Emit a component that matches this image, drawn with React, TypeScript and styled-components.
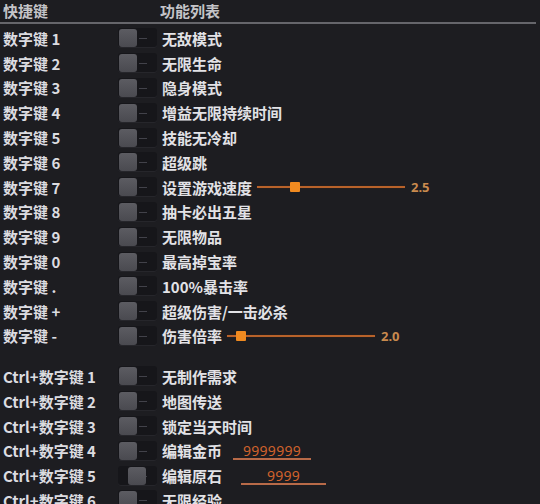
import styled, { createGlobalStyle } from "styled-components"

const Global = createGlobalStyle`
  html, body {
    margin: 0;
    padding: 0;
    background: #1d1d21;
    overflow: hidden;
  }
  body {
    font-family: "Noto Sans CJK SC", "Noto Sans", sans-serif;
  }
`

const Page = styled.div`
  width: 540px;
  height: 504px;
  background: #1d1d21;
  overflow: hidden;
`

const Header = styled.div`
  display: flex;
  align-items: center;
  height: 20px;
  padding: 0 0 2px 3px;
  border-bottom: 2px solid #66666b;
  margin-right: 4px;
  color: #c4c4c8;
  font-size: 15px;
  font-weight: 700;
`

const HeadKey = styled.div`
  width: 157px;
`

const List = styled.div`
  padding-top: 2px;
`

const Row = styled.div<{ $gap?: boolean }>`
  display: flex;
  align-items: center;
  height: 24.8px;
  margin-top: ${(p) => (p.$gap ? "15.7px" : "0")};
`

const KeyLabel = styled.div`
  width: 114px;
  padding-left: 3px;
  box-sizing: border-box;
  color: #dcdce0;
  font-size: 15px;
  font-weight: 700;
  white-space: nowrap;
`

const Track = styled.div`
  position: relative;
  width: 39px;
  height: 20px;
  margin-left: 4px;
  margin-right: 5px;
  background: #16161a;
  border-radius: 3px;
  box-shadow: inset 0 -1px 0 #26262b;
  flex-shrink: 0;
`

const Knob = styled.div<{ $shift: number }>`
  position: absolute;
  top: 1px;
  left: ${(p) => 1 + p.$shift}px;
  width: 18px;
  height: 18px;
  border-radius: 3px;
  background: linear-gradient(#5c5c62, #4a4a50);
`

const Dash = styled.div`
  position: absolute;
  top: 10px;
  left: 21px;
  width: 8px;
  height: 1px;
  background: #42424a;
`

const FuncName = styled.div`
  color: #e2e2e6;
  font-size: 15px;
  font-weight: 700;
  white-space: nowrap;
`

const SliderBox = styled.div<{ $width: number }>`
  position: relative;
  width: ${(p) => p.$width}px;
  height: 12px;
  margin-left: 5px;
  display: flex;
  align-items: center;
`

const SliderLine = styled.div`
  width: 100%;
  height: 2px;
  background: #b8622a;
  box-shadow: 0 0 1px #6a2a10;
`

const SliderThumb = styled.div`
  position: absolute;
  top: 1px;
  width: 10px;
  height: 10px;
  background: #f08a20;
  border-radius: 1px;
`

const SliderValue = styled.div`
  margin-left: 6px;
  color: #c98a4e;
  font-family: "Noto Sans", sans-serif;
  font-size: 13px;
  font-weight: 700;
`

const Field = styled.div<{ $width: number; $offset: number }>`
  width: ${(p) => p.$width}px;
  margin-left: ${(p) => p.$offset}px;
  height: 18px;
  border-bottom: 2px solid #b86a48;
  color: #d0622c;
  font-family: "Noto Sans", sans-serif;
  font-size: 14px;
  line-height: 18px;
  text-align: center;
  box-sizing: border-box;
  letter-spacing: 0.3px;
`

type Item = {
  key: string
  name: string
  gap?: boolean
  shift?: number
  slider?: { width: number; pos: number; value: string }
  field?: { width: number; offset: number; value: string }
}

const items: Item[] = [
  { key: "数字键 1", name: "无敌模式" },
  { key: "数字键 2", name: "无限生命" },
  { key: "数字键 3", name: "隐身模式" },
  { key: "数字键 4", name: "增益无限持续时间" },
  { key: "数字键 5", name: "技能无冷却" },
  { key: "数字键 6", name: "超级跳" },
  { key: "数字键 7", name: "设置游戏速度", slider: { width: 148, pos: 33, value: "2.5" } },
  { key: "数字键 8", name: "抽卡必出五星" },
  { key: "数字键 9", name: "无限物品" },
  { key: "数字键 0", name: "最高掉宝率" },
  { key: "数字键 .", name: "100%暴击率" },
  { key: "数字键 +", name: "超级伤害/一击必杀" },
  { key: "数字键 -", name: "伤害倍率", slider: { width: 148, pos: 9, value: "2.0" } },
  { key: "Ctrl+数字键 1", name: "无制作需求", gap: true },
  { key: "Ctrl+数字键 2", name: "地图传送" },
  { key: "Ctrl+数字键 3", name: "锁定当天时间" },
  { key: "Ctrl+数字键 4", name: "编辑金币", field: { width: 78, offset: 11, value: "9999999" } },
  { key: "Ctrl+数字键 5", name: "编辑原石", shift: 9, field: { width: 85, offset: 19, value: "9999" } },
  { key: "Ctrl+数字键 6", name: "无限经验" },
]

export default function App() {
  return (
    <Page>
      <Global />
      <Header>
        <HeadKey>快捷键</HeadKey>
        <div>功能列表</div>
      </Header>
      <List>
        {items.map((it) => (
          <Row key={it.key} $gap={it.gap}>
            <KeyLabel>{it.key}</KeyLabel>
            <Track>
              <Dash />
              <Knob $shift={it.shift ?? 0} />
            </Track>
            <FuncName>{it.name}</FuncName>
            {it.slider && (
              <>
                <SliderBox $width={it.slider.width}>
                  <SliderLine />
                  <SliderThumb style={{ left: it.slider.pos }} />
                </SliderBox>
                <SliderValue>{it.slider.value}</SliderValue>
              </>
            )}
            {it.field && (
              <Field $width={it.field.width} $offset={it.field.offset}>
                {it.field.value}
              </Field>
            )}
          </Row>
        ))}
      </List>
    </Page>
  )
}
